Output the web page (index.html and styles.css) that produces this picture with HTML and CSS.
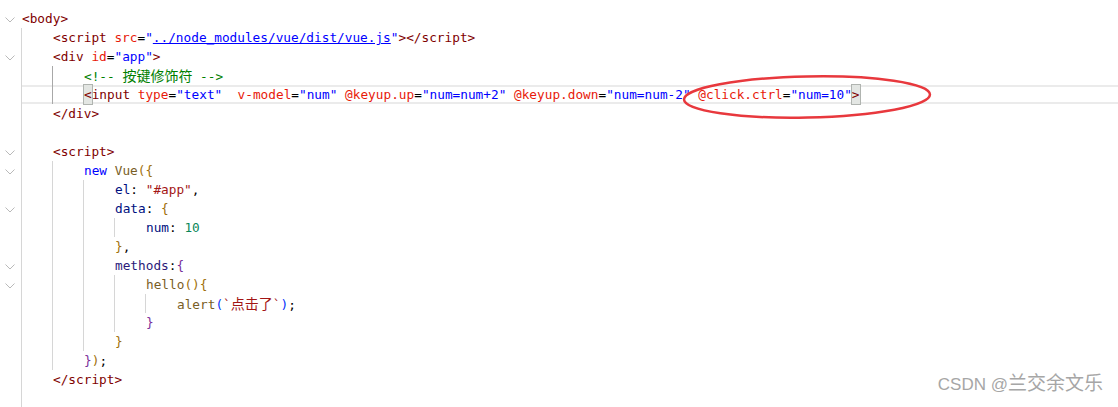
FILE: index.html
```html
<!DOCTYPE html>
<html>
<head>
<meta charset="utf-8">
<link rel="stylesheet" href="styles.css">
</head>
<body>
<div class="editor">
  <div class="ln"><span class="gut"><svg class="chev" viewBox="0 0 10 6"><polyline points="0.5,0.5 5,5 9.5,0.5"/></svg></span><span class="code"><span class="tx"><span class="tg">&lt;body&gt;</span></span></span></div>
  <div class="ln"><span class="gut"></span><span class="code"><span class="g"></span><span class="tx"><span class="tg">&lt;script</span> <span class="at">src</span>=<span class="av">"<span class="ul">../node_modules/vue/dist/vue.js</span>"</span><span class="tg">&gt;&lt;/script&gt;</span></span></span></div>
  <div class="ln"><span class="gut"><svg class="chev" viewBox="0 0 10 6"><polyline points="0.5,0.5 5,5 9.5,0.5"/></svg></span><span class="code"><span class="g"></span><span class="tx"><span class="tg">&lt;div</span> <span class="at">id</span>=<span class="av">"app"</span><span class="tg">&gt;</span></span></span></div>
  <div class="ln"><span class="gut"></span><span class="code"><span class="g"></span><span class="g act"></span><span class="tx"><span class="cm">&lt;!-- <span class="cjk">按键修饰符</span> --&gt;</span></span></span></div>
  <div class="ln"><span class="gut"></span><span class="code cur"><span class="g"></span><span class="g act"></span><span class="tx"><span class="bm tg">&lt;</span><span class="tg">input</span> <span class="at">type</span>=<span class="av">"text"</span>  <span class="at">v-model</span>=<span class="av">"num"</span> <span class="at">@keyup.up</span>=<span class="av">"num=num+2"</span> <span class="at">@keyup.down</span>=<span class="av">"num=num-2"</span> <span class="at">@click.ctrl</span>=<span class="av">"num=10"</span><span class="bm tg">&gt;</span></span></span></div>
  <div class="ln"><span class="gut"></span><span class="code"><span class="g"></span><span class="tx"><span class="tg">&lt;/div&gt;</span></span></span></div>
  <div class="ln"><span class="gut"></span><span class="code"><span class="g"></span></span></div>
  <div class="ln"><span class="gut"><svg class="chev" viewBox="0 0 10 6"><polyline points="0.5,0.5 5,5 9.5,0.5"/></svg></span><span class="code"><span class="g"></span><span class="tx"><span class="tg">&lt;script&gt;</span></span></span></div>
  <div class="ln"><span class="gut"><svg class="chev" viewBox="0 0 10 6"><polyline points="0.5,0.5 5,5 9.5,0.5"/></svg></span><span class="code"><span class="g"></span><span class="g"></span><span class="tx"><span class="kw">new</span> <span class="fn">Vue</span><span class="b1">(</span><span class="b1">{</span></span></span></div>
  <div class="ln"><span class="gut"></span><span class="code"><span class="g"></span><span class="g"></span><span class="g"></span><span class="tx"><span class="pr">el</span>: <span class="st">"#app"</span>,</span></span></div>
  <div class="ln"><span class="gut"><svg class="chev" viewBox="0 0 10 6"><polyline points="0.5,0.5 5,5 9.5,0.5"/></svg></span><span class="code"><span class="g"></span><span class="g"></span><span class="g"></span><span class="tx"><span class="pr">data</span>: <span class="b1">{</span></span></span></div>
  <div class="ln"><span class="gut"></span><span class="code"><span class="g"></span><span class="g"></span><span class="g"></span><span class="g"></span><span class="tx"><span class="pr">num</span>: <span class="nu">10</span></span></span></div>
  <div class="ln"><span class="gut"></span><span class="code"><span class="g"></span><span class="g"></span><span class="g"></span><span class="tx"><span class="b1">}</span>,</span></span></div>
  <div class="ln"><span class="gut"><svg class="chev" viewBox="0 0 10 6"><polyline points="0.5,0.5 5,5 9.5,0.5"/></svg></span><span class="code"><span class="g"></span><span class="g"></span><span class="g"></span><span class="tx"><span class="pr2">methods</span>:<span class="b2">{</span></span></span></div>
  <div class="ln"><span class="gut"><svg class="chev" viewBox="0 0 10 6"><polyline points="0.5,0.5 5,5 9.5,0.5"/></svg></span><span class="code"><span class="g"></span><span class="g"></span><span class="g"></span><span class="g"></span><span class="tx"><span class="fn">hello</span><span class="b1">()</span><span class="b1">{</span></span></span></div>
  <div class="ln"><span class="gut"></span><span class="code"><span class="g"></span><span class="g"></span><span class="g"></span><span class="g"></span><span class="g"></span><span class="tx"><span class="fn">alert</span><span class="b3">(</span><span class="st">`<span class="cjk">点击了</span>`</span><span class="b3">)</span>;</span></span></div>
  <div class="ln"><span class="gut"></span><span class="code"><span class="g"></span><span class="g"></span><span class="g"></span><span class="g"></span><span class="tx"><span class="b2">}</span></span></span></div>
  <div class="ln"><span class="gut"></span><span class="code"><span class="g"></span><span class="g"></span><span class="g"></span><span class="tx"><span class="b1">}</span></span></span></div>
  <div class="ln"><span class="gut"></span><span class="code"><span class="g"></span><span class="g"></span><span class="tx"><span class="b2">}</span><span class="b1">)</span>;</span></span></div>
  <div class="ln"><span class="gut"></span><span class="code"><span class="g"></span><span class="tx"><span class="tg">&lt;/script&gt;</span></span></span></div>
  <div class="ln"><span class="gut"></span><span class="code"><span class="g"></span></span></div>
</div>
<svg class="mark" viewBox="0 0 252 48" width="252" height="48"><ellipse cx="126" cy="24" rx="123" ry="20.5" transform="rotate(-1.2 126 24)"/></svg>
<div class="wm">CSDN @<span class="wmc">兰交余文乐</span></div>
</body>
</html>
```
FILE: styles.css
```css
html, body {
  margin: 0;
  padding: 0;
  background: #ffffff;
  overflow: hidden;
}
body {
  width: 1118px;
  height: 407px;
  position: relative;
}
.editor {
  padding-top: 9px;
  font-family: "DejaVu Sans Mono", "Liberation Mono", monospace;
  font-size: 12.75px;
  color: #000000;
}
.ln {
  display: flex;
  height: 19px;
  line-height: 19px;
}
.gut {
  width: 22px;
  flex: none;
  display: flex;
  align-items: center;
}
.chev {
  width: 10px;
  height: 6px;
  margin-left: 5px;
  margin-top: 2px;
}
.chev polyline {
  fill: none;
  stroke: #b9b9b9;
  stroke-width: 1;
}
.code {
  flex: 1;
  display: flex;
  height: 19px;
}
.code.cur {
  box-shadow: inset 0 2px 0 #ebebeb, inset 0 -2px 0 #ebebeb;
}
.g {
  display: inline-block;
  flex: none;
  width: 31px;
  height: 19px;
  box-shadow: -1px 0 0 #d6d6d6;
}
.g.act {
  box-shadow: -1px 0 0 #a8a8a8;
}
.tx {
  white-space: pre;
}
.cjk {
  font-family: "Noto Sans CJK SC", sans-serif;
  font-size: 14px;
}
.tg { color: #800000; }
.at { color: #e8190a; }
.av { color: #0000ff; }
.ul { text-decoration: underline; }
.cm { color: #008000; }
.kw { color: #0000ff; }
.fn { color: #795e26; }
.pr { color: #001080; }
.pr2 { color: #2b1a7a; }
.st { color: #a31515; }
.nu { color: #098658; }
.b1 { color: #a0700a; }
.b2 { color: #7a2f9a; }
.b3 { color: #0431fa; }
.bm {
  background: #e3e6e3;
  outline: 1px solid #b0b4b0;
  padding: 2px 0;
}
.mark {
  position: absolute;
  left: 681px;
  top: 73px;
  overflow: visible;
}
.mark ellipse {
  fill: none;
  stroke: #e8383d;
  stroke-width: 2.5;
}
.wm {
  position: absolute;
  right: 15px;
  bottom: 12px;
  font-family: "Liberation Sans", "Noto Sans CJK SC", sans-serif;
  font-size: 17px;
  line-height: 20px;
  color: #a6a6a6;
}
.wmc {
  font-family: "Noto Sans CJK SC", sans-serif;
  font-size: 19px;
}
```
